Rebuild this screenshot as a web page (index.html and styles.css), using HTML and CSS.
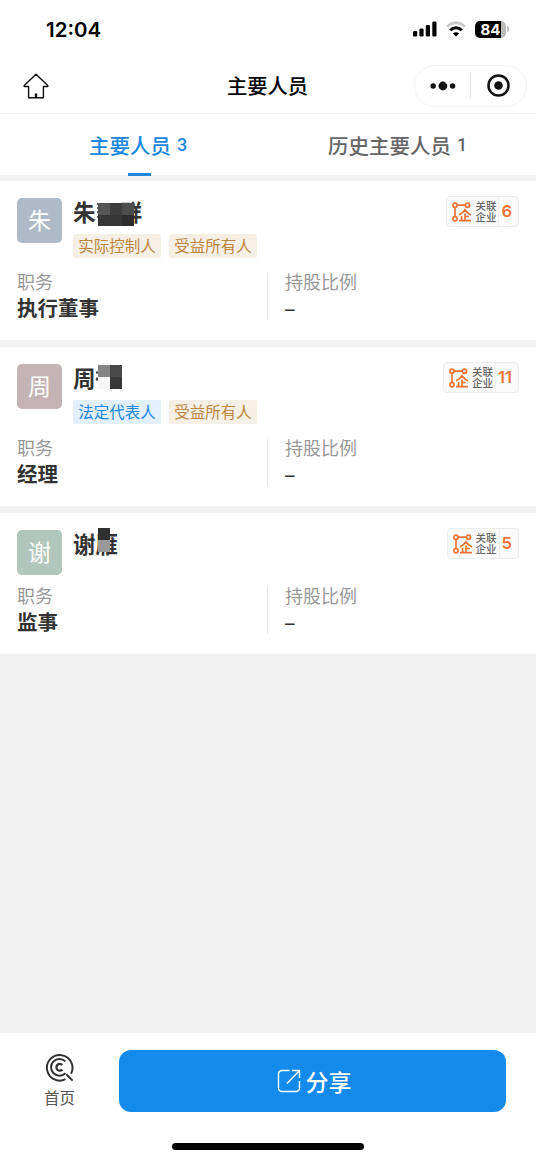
FILE: index.html
```html
<!DOCTYPE html>
<html lang="zh-CN">
<head>
<meta charset="utf-8">
<title>主要人员</title>
<link rel="stylesheet" href="styles.css">
</head>
<body>
<svg class="defs" width="0" height="0" aria-hidden="true">
  <symbol id="relation" viewBox="0 0 20 22">
    <g fill="none" stroke="#f07436" stroke-width="1.7">
      <circle cx="3" cy="4.2" r="2.1"/><circle cx="15.5" cy="4.2" r="2.1"/><circle cx="3" cy="17.7" r="2.1"/>
      <path d="M5 4.2h8.4M3 6.2v9.5"/>
      <path d="M7 14c2.6-1.2 4.6-3 6-5.2 1.4 2.2 3.4 4 6 5.200M13 12.500v7M13 15.500h3.800M9.600 15v4.500M7 19.700h12"/>
    </g>
  </symbol>
</svg>
<header class="status">
  <span class="time">12:04</span>
  <div class="signals">
    <svg class="cell" viewBox="0 0 24 16"><rect x="0" y="10" width="4.2" height="5.5" rx="1.2"/><rect x="6.4" y="7.5" width="4.2" height="8" rx="1.2"/><rect x="12.8" y="4" width="4.2" height="11.5" rx="1.2"/><rect x="19.3" y=".5" width="4.2" height="15" rx="1.2"/></svg>
    <svg class="wifi" viewBox="0 0 20 16" fill="none" stroke-width="2.8"><path d="M1 5.7C6 .6 14 .6 19 5.7" stroke="#c9c9c9"/><path d="M4.2 9.2c3.300-3.300 8.300-3.300 11.600 0" stroke="#000"/><path d="M7 12.400c1.800-1.500 4.200-1.500 6 0l-3 3.100z" fill="#000"/></svg>
    <span class="battery">84</span><i class="battery-tip"></i>
  </div>
</header>
<nav class="nav">
  <svg class="home" viewBox="0 0 26 26" fill="none" stroke="#111" stroke-width="1.4" stroke-linejoin="round"><path d="M13 1.2 1.2 12.500v1h4.400v11.300h14.800V13.500h4.400v-1z"/><path d="M13 20.500v4.300" stroke-width="2.4"/></svg>
  <h1>主要人员</h1>
  <div class="capsule">
    <svg class="dots" viewBox="0 0 26 12"><circle cx="3.2" cy="6" r="2.7"/><circle cx="12.9" cy="6" r="4.4"/><circle cx="22.6" cy="6" r="2.7"/></svg>
    <i></i>
    <svg class="target" viewBox="0 0 22 22"><circle cx="11" cy="11" r="9.6" fill="none" stroke="#111" stroke-width="2.4"/><circle cx="11" cy="11" r="4.1"/></svg>
  </div>
</nav>
<div class="tabs">
  <div class="tab active">主要人员 <span>3</span></div>
  <div class="tab">历史主要人员 <span>1</span></div>
</div>
<main>
  <section class="card">
    <div class="head">
      <div class="avatar blue">朱</div>
      <div class="info">
        <div class="name">朱<span class="masked wide">群<svg class="mask" viewBox="0 0 46 24"><path d="M1 2h5M1 6h5M1 10h4M1 15h5M2 20h4" stroke="#333" stroke-width="1.6"/><path fill="#555" d="M2 1h12v12H2z"/><path fill="#3e3e3e" d="M14 1h12v12H14z"/><path fill="#4d4d4d" d="M26 1h12v12H26z"/><path fill="#363636" d="M2 13h24v11H2z"/><path fill="#2c2c2c" d="M26 13h12v11H26z"/></svg></span></div>
        <div class="tags"><span class="tag">实际控制人</span><span class="tag">受益所有人</span></div>
      </div>
      <div class="related"><svg><use href="#relation"/></svg><div class="caption"><span>关联</span><span>企业</span></div><b>6</b></div>
    </div>
    <div class="details"><div class="field"><span>职务</span><strong>执行董事</strong></div><div class="field share"><span>持股比例</span><em>–</em></div></div>
  </section>
  <section class="card">
    <div class="head">
      <div class="avatar rose">周</div>
      <div class="info">
        <div class="name">周<svg class="mosaic" viewBox="0 0 27 24"><path d="M1 7.500h3M2.500 12.500l-1 3" stroke="#333" stroke-width="2"/><path fill="#858585" d="M3 0h12v12H3z"/><path fill="#484848" d="M15 0h12v12H15z"/><path fill="#f8f8f8" d="M3 12h12v12H3z"/><path fill="#383838" d="M15 12h12v12H15z"/></svg></div>
        <div class="tags"><span class="tag legal">法定代表人</span><span class="tag">受益所有人</span></div>
      </div>
      <div class="related"><svg><use href="#relation"/></svg><div class="caption"><span>关联</span><span>企业</span></div><b>11</b></div>
    </div>
    <div class="details"><div class="field"><span>职务</span><strong>经理</strong></div><div class="field share"><span>持股比例</span><em>–</em></div></div>
  </section>
  <section class="card">
    <div class="head">
      <div class="avatar green">谢</div>
      <div class="info">
        <div class="name">谢<span class="masked">雁<svg class="mask short" viewBox="0 0 12 24"><path fill="#303030" d="M0 0h12v12H0z"/><path fill="#999" d="M0 12h12v12H0z"/></svg></span></div>
      </div>
      <div class="related"><svg><use href="#relation"/></svg><div class="caption"><span>关联</span><span>企业</span></div><b>5</b></div>
    </div>
    <div class="details"><div class="field"><span>职务</span><strong>监事</strong></div><div class="field share"><span>持股比例</span><em>–</em></div></div>
  </section>
</main>
<footer>
  <div class="actions">
    <div class="index">
      <svg viewBox="0 0 30 30" fill="none" stroke="#333" stroke-width="2"><path d="M20.500 26.200A12.800 12.800 0 1 1 26 20.800M21.300 21.300l6.300 6.300"/><path d="M20.400 8.400a8.400 8.400 0 1 0 0 11.800"/><path d="M17.300 12a3.400 3.400 0 1 0 0 4.600" stroke-width="2.3"/></svg>
      <span>首页</span>
    </div>
    <div class="share-button">
      <svg viewBox="0 0 24 24" fill="none" stroke="#fff" stroke-width="1.4"><path d="M12.500 1.500H5A3.500 3.500 0 0 0 1.500 5v14A3.500 3.500 0 0 0 5 22.500h14a3.500 3.500 0 0 0 3.500-3.500v-7M15 1.500h7.500V9M22.500 1.500 10 14.500"/></svg>
      <span>分享</span>
    </div>
  </div>
  <div class="home-bar"></div>
</footer>
</body>
</html>
```
FILE: styles.css
```css
* { box-sizing: border-box; }
body {
  margin: 0;
  height: 1160px;
  display: flex;
  flex-direction: column;
  overflow: hidden;
  background: #f2f2f2;
  color: #333;
  font-family: "Noto Sans CJK SC", sans-serif;
}
svg { display: block; flex: none; }
.defs { position: absolute; }
.status {
  height: 58px;
  background: #fff;
  display: flex;
  justify-content: space-between;
  padding: 0 27px 0 46px;
  align-items: center;
  color: #000;
  font-family: Inter, sans-serif;
}
.time { font-size: 20.5px; font-weight: 600; padding-top: 1px; }
.signals { display: flex; align-items: center; }
.cell { width: 24px; height: 16px; }
.wifi { width: 20px; height: 16px; margin: 0 9px 0 9px; }
.battery {
  width: 31px;
  height: 17px;
  border-radius: 5px;
  background: linear-gradient(90deg, #000 84%, #bbb 84%);
  color: #fff;
  font-size: 15px;
  line-height: 17px;
  font-weight: 700;
  text-align: center;
}
.battery-tip { width: 2px; height: 6px; margin-left: 1px; background: #bbb; border-radius: 0 2px 2px 0; }
.nav {
  height: 56px;
  background: #fff;
  display: grid;
  grid-template-columns: 204px 1fr auto;
  align-items: center;
  padding: 0 9px 0 23px;
  border-bottom: 1px solid #f4f4f4;
}
.home { width: 26px; height: 26px; }
h1 { margin: 0; padding-bottom: 2px; font-size: 20.3px; font-weight: 500; line-height: 30px; color: #000; }
.capsule {
  width: 113px;
  height: 42px;
  border: 1px solid #f3f3f3;
  border-radius: 21px;
  display: flex;
  align-items: center;
  padding-left: 15px;
  fill: #111;
}
.dots { width: 26px; height: 12px; }
.capsule i { width: 1px; height: 26px; background: #e4e4e4; margin: 0 16px 0 14px; }
.target { width: 23px; height: 23px; }
.tabs { height: 61px; display: flex; background: #fff; flex: none; }
.tab {
  position: relative;
  width: 50%;
  display: flex;
  gap: 6px;
  padding-left: 60px;
  font-size: 20.5px;
  font-weight: 500;
  line-height: 62px;
  color: #666;
}
.tab span { font-family: Roboto, sans-serif; font-size: 18px; }
.tab.active { color: #1c88df; padding-left: 89px; }
.tab.active::after {
  content: "";
  position: absolute;
  left: 128px;
  bottom: -1px;
  width: 23px;
  height: 3px;
  background: #1c88df;
}
main { flex: 1; padding-top: 6px; display: flex; flex-direction: column; gap: 7px; }
.card { background: #fff; padding: 17px 17px 20px; }
.head { display: flex; min-height: 45px; }
.avatar {
  width: 45px;
  height: 45px;
  border-radius: 5px;
  color: #fff;
  font-size: 23px;
  line-height: 43px;
  text-align: center;
}
.blue { background: #aebac7; }
.rose { background: #c5b3b5; }
.green { background: #b1c6bc; }
.info { margin-left: 11px; flex: 1; }
.name { display: flex; height: 28px; line-height: 26px; font-size: 22.5px; font-weight: 700; }
.masked { position: relative; }
.wide { padding-left: 24px; }
.mask { position: absolute; left: 0; top: 4px; width: 46px; height: 24px; }
.mask.short { left: 2px; top: -2px; width: 12px; }
.mosaic { width: 27px; height: 24px; margin: 1px 0 0 -1px; }
.tags { display: flex; gap: 8px; margin: 8px 0 3px; height: 24px; }
.tag {
  width: 88px;
  height: 24px;
  border-radius: 2px;
  background: #f6efe6;
  color: #bd8740;
  font-size: 15.5px;
  line-height: 23px;
  text-align: center;
}
.legal { background: #e1f0fc; color: #1b87df; }
.related {
  height: 31px;
  margin-top: -2px;
  border: 1px solid #ececec;
  border-radius: 4px;
  background: #fafafa;
  display: flex;
  align-items: center;
  padding-left: 5px;
}
.related svg { width: 20px; height: 22px; }
.caption { display: flex; flex-direction: column; margin-left: 3px; font-size: 10.5px; line-height: 11px; font-weight: 500; color: #666; padding-bottom: 1px; }
.related b {
  height: 29px;
  line-height: 28px;
  margin-left: 2px;
  padding: 0 6px 0 2px;
  border-left: 1px solid #eee;
  color: #f07436;
  font-family: Inter, sans-serif;
  font-size: 16.5px;
  font-weight: 600;
}
.details { display: flex; height: 47px; margin-top: 12px; }
.field { width: 250px; display: flex; flex-direction: column; }
.field span { font-size: 18px; line-height: 16px; color: #999; }
.field strong { font-size: 20.5px; line-height: 28px; margin-top: 4px; font-weight: 700; }
.field em { font-style: normal; font-family: Inter, sans-serif; font-size: 19px; line-height: 28px; margin-top: 7px; }
.share { border-left: 1px solid #e9e9e9; padding-left: 17px; }
footer { height: 127px; background: #fff; padding-top: 17px; display: flex; flex-direction: column; align-items: center; flex: none; }
.actions { width: 100%; display: flex; }
.index { width: 119px; display: flex; flex-direction: column; align-items: center; padding-top: 3px; font-size: 15.5px; line-height: 20px; color: #555; }
.index svg { width: 30px; height: 30px; }
.index span { margin-top: 4px; }
.share-button {
  width: 387px;
  height: 62px;
  border-radius: 12px;
  background: #148aed;
  color: #fff;
  display: flex;
  align-items: center;
  justify-content: center;
  gap: 5px;
  padding-left: 3px;
  font-size: 23px;
  font-weight: 500;
  line-height: 60px;
}
.share-button svg { width: 24px; height: 24px; }
.home-bar { width: 192px; height: 7px; border-radius: 4px; background: #000; margin-top: 31px; }
```
